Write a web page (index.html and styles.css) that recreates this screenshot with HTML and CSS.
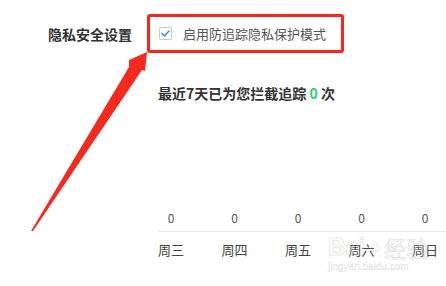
FILE: index.html
```html
<!DOCTYPE html>
<html lang="zh-CN">
<head>
<meta charset="utf-8">
<link rel="stylesheet" href="styles.css">
</head>
<body>
<div class="page">
  <div class="setting-row">
    <div class="setting-label">隐私安全设置</div>
    <label class="highlight">
      <span class="checkbox">
        <svg width="11" height="11" viewBox="0 0 11 11"><path d="M2 5.6 L4.4 8 L9 3" fill="none" stroke="#3d8ef0" stroke-width="1.6" stroke-linecap="round" stroke-linejoin="round"/></svg>
      </span>
      <span class="option-text">启用防追踪隐私保护模式</span>
    </label>
  </div>
  <div class="content">
    <div class="stat">最近7天已为您拦截追踪 <span class="count">0</span> 次</div>
    <div class="chart">
      <div class="values">
        <div class="cell"><span>0</span></div>
        <div class="cell"><span>0</span></div>
        <div class="cell"><span>0</span></div>
        <div class="cell"><span>0</span></div>
        <div class="cell"><span>0</span></div>
      </div>
      <div class="days">
        <div class="cell"><span>周三</span></div>
        <div class="cell"><span>周四</span></div>
        <div class="cell"><span>周五</span></div>
        <div class="cell"><span>周六</span></div>
        <div class="cell"><span>周日</span></div>
      </div>
    </div>
  </div>
  <svg class="arrow" width="446" height="286" viewBox="0 0 446 286">
    <polygon points="147,52 129,60 129,67 31,231 33,231 142,70 145,71" fill="#f52a1e"/>
  </svg>
  <div class="watermark">
    <div class="wm-top"><span class="wm-bai">Bai</span><span class="wm-paw">●</span><span class="wm-jy">经验</span></div>
    <div class="wm-url">jingyan.baidu.com</div>
  </div>
</div>
</body>
</html>
```
FILE: styles.css
```css
html, body {
  margin: 0;
  padding: 0;
  background: #fff;
  overflow: hidden;
}
body {
  width: 446px;
  height: 286px;
  font-family: "Noto Sans CJK SC", "Microsoft YaHei", sans-serif;
}
.page {
  position: relative;
  width: 446px;
  height: 286px;
  padding-top: 14px;
  box-sizing: border-box;
  overflow: hidden;
}
.setting-row {
  display: flex;
  align-items: center;
  padding-left: 48px;
}
.setting-label {
  width: 99px;
  font-size: 14px;
  font-weight: bold;
  color: #333;
  line-height: 20px;
}
.highlight {
  display: flex;
  align-items: center;
  width: 197px;
  height: 39px;
  box-sizing: border-box;
  border: 3px solid #f5261c;
  border-radius: 3px;
  padding-left: 9px;
}
.checkbox {
  width: 13px;
  height: 13px;
  box-sizing: border-box;
  border: 1px solid #c9c9c9;
  border-radius: 2px;
  display: flex;
  align-items: center;
  justify-content: center;
  background: #fff;
}
.option-text {
  margin-left: 11px;
  font-size: 13px;
  color: #555;
  line-height: 18px;
}
.content {
  padding-left: 158px;
}
.stat {
  margin-top: 30px;
  font-size: 14px;
  font-weight: bold;
  color: #333;
  line-height: 20px;
  white-space: nowrap;
}
.count {
  color: #2ccf75;
}
.chart {
  margin-top: 107px;
  width: 288px;
  overflow: hidden;
}
.values, .days {
  display: grid;
  grid-template-columns: repeat(4, 63.5px) 34px;
}
.values {
  padding-bottom: 5px;
  border-bottom: 1px solid #e9e9e9;
}
.cell span {
  display: block;
  width: 26px;
  text-align: center;
}
.values .cell span {
  font-size: 12px;
  line-height: 16px;
  color: #555;
}
.days {
  padding-top: 9px;
}
.days .cell span {
  font-size: 13px;
  line-height: 18px;
  color: #444;
}
.arrow {
  position: absolute;
  left: 0;
  top: 0;
  pointer-events: none;
}
.watermark {
  position: absolute;
  left: 328px;
  top: 234px;
  color: rgba(255, 255, 255, 0);
  -webkit-text-stroke: 1px rgba(200, 200, 200, 0.45);
  font-family: "Liberation Sans", sans-serif;
  pointer-events: none;
}
.wm-top {
  display: flex;
  align-items: center;
  line-height: 26px;
}
.wm-bai {
  font-size: 24px;
  font-weight: bold;
}
.wm-paw {
  font-size: 18px;
  margin: 0 4px;
}
.wm-jy {
  font-size: 22px;
  font-family: "Noto Sans CJK SC", sans-serif;
}
.wm-url {
  font-size: 10px;
  line-height: 14px;
  -webkit-text-stroke: 0.6px rgba(200, 200, 200, 0.45);
}
```
